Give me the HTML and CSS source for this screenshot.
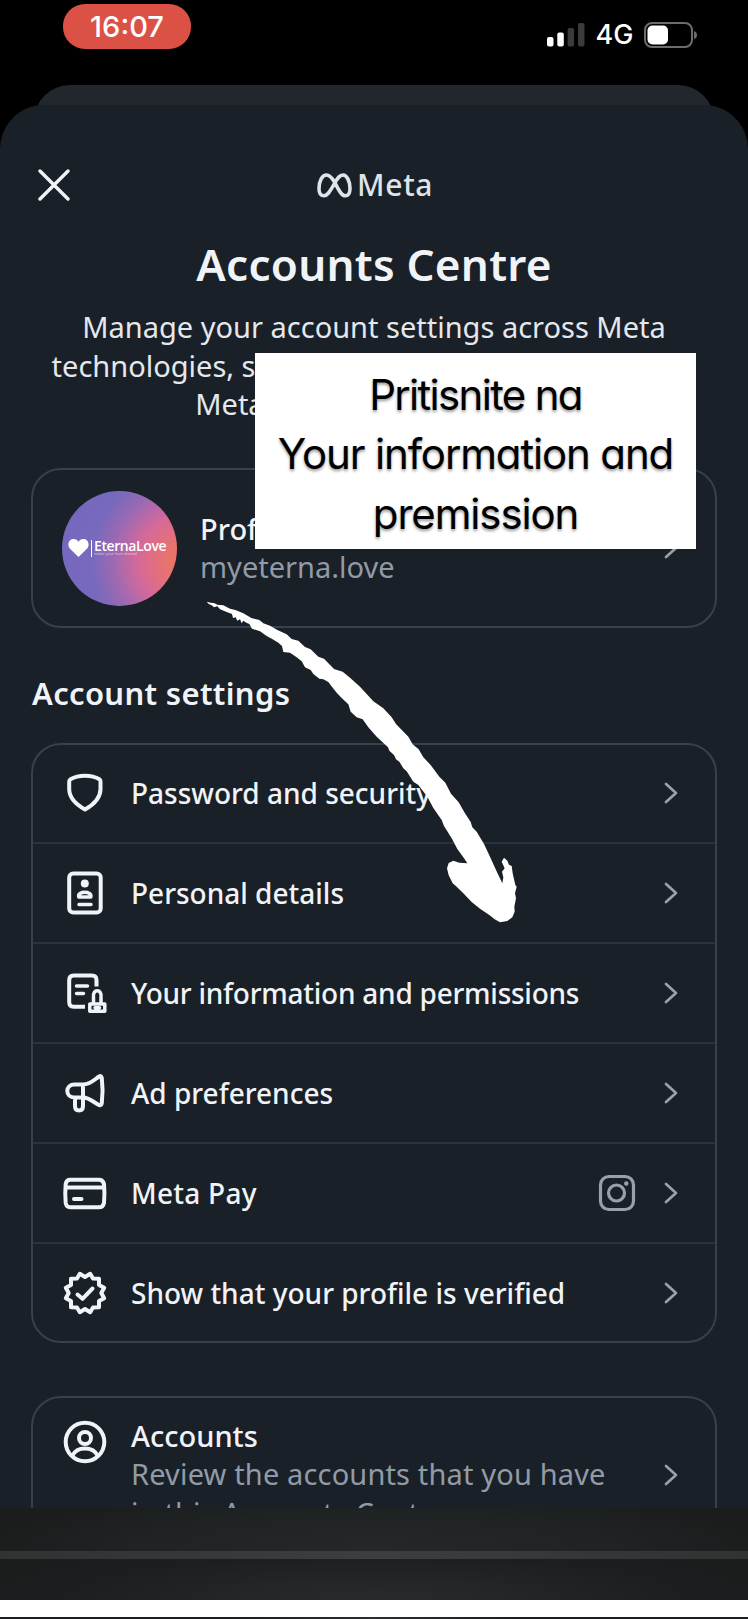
FILE: index.html
```html
<!DOCTYPE html>
<html lang="en">
<head>
<meta charset="utf-8">
<title>Accounts Centre</title>
<link rel="stylesheet" href="styles.css">
</head>
<body>
<div class="screen">
  <header class="status">
    <div class="clock">16:07</div>
    <div class="signals">
      <svg class="bars" width="38" height="24" viewBox="0 0 38 24">
        <rect x="0" y="14" width="6.5" height="9.5" rx="2" fill="#fff"/>
        <rect x="10.300" y="9.500" width="6.500" height="14" rx="2" fill="#fff"/>
        <rect x="20.600" y="5" width="6.500" height="18.500" rx="2" fill="#3b3b3d"/>
        <rect x="31" y="0" width="6.500" height="23.500" rx="2" fill="#3b3b3d"/>
      </svg>
      <span class="network">4G</span>
      <svg class="battery" width="53" height="26" viewBox="0 0 53 26">
        <rect x="1" y="1" width="47" height="24" rx="7" fill="none" stroke="#6c6c6e" stroke-width="2"/>
        <rect x="3.500" y="3.500" width="20.500" height="19" rx="5" fill="#fff"/>
        <path d="M50 9q3 1 3 4t-3 4z" fill="#6c6c6e"/>
      </svg>
    </div>
  </header>
  <div class="sheet-behind"></div>
  <main class="sheet">
    <div class="topbar">
      <svg class="close" width="32" height="32" viewBox="0 0 32 32"><path d="M2 2L30 30M30 2L2 30" stroke="#f1f4f7" stroke-width="3.400" stroke-linecap="round"/></svg>
      <div class="brand">
        <svg width="35" height="25" viewBox="0 0 35 25"><path d="M17.500 9C14.500 4 12.500 2 9.500 2C5 2 2 8.500 2 15.500C2 20 3.800 22.800 7 22.800C10 22.800 12.500 19.500 17.500 10.500C20.500 5 22.500 2 26 2C30 2 33 8.500 33 15.500C33 20 31.300 22.800 28.200 22.800C25 22.800 22.500 19 17.500 9Z" fill="none" stroke="#dfe4ea" stroke-width="3.600"/></svg>
        <span class="brand-name">Meta</span>
      </div>
    </div>
    <h1 class="title">Accounts Centre</h1>
    <p class="intro">Manage your account settings across Meta<br>technologies, such as Facebook, Instagram and<br>Meta Horizon. Learn more</p>

    <section class="card profile">
      <div class="avatar">
        <svg class="heart" width="21" height="18" viewBox="0 0 21 18"><path d="M10.500 18L2 9.800C-1 6.500 .3 0 5.500 0C8 0 9.600 1.200 10.500 2.800C11.400 1.200 13 0 15.500 0C20.700 0 22 6.500 19 9.800Z" fill="#fff"/></svg>
        <div class="wordmark"><span class="logo-name">EternaLove</span><span class="logo-tag">make your love eternal</span></div>
      </div>
      <div class="profile-text"><div class="strong">Profiles</div><div class="muted handle">myeterna.love</div></div>
      <svg class="chevron" width="14" height="24" viewBox="0 0 14 24"><path d="M2 3L12 12L2 21"/></svg>
    </section>

    <h2 class="section-title">Account settings</h2>
    <section class="card list">
      <div class="row">
        <svg class="icon" viewBox="0 0 48 48"><path d="M24 6.700C30 6.700 35 8.200 38.500 10.300Q39.500 11 39.500 12.500V20C39.500 30 32 36 24 40.500C16 36 8.200 30 8.200 20V12.500Q8.200 11 9.500 10.300C13 8.200 18 6.700 24 6.700Z"/></svg>
        <span class="label">Password and security</span>
        <svg class="chevron" width="14" height="24" viewBox="0 0 14 24"><path d="M2 3L12 12L2 21"/></svg>
      </div>
      <div class="row">
        <svg class="icon" viewBox="0 0 48 48"><rect x="8.200" y="4.500" width="31.500" height="39" rx="4"/><circle cx="23.800" cy="14.500" r="4" class="solid"/><path class="fine" d="M17.800 28C16 21.800 31.500 21.800 29.800 28ZM18 35.500H30"/></svg>
        <span class="label">Personal details</span>
        <svg class="chevron" width="14" height="24" viewBox="0 0 14 24"><path d="M2 3L12 12L2 21"/></svg>
      </div>
      <div class="row">
        <svg class="icon" viewBox="0 0 48 48"><path class="butt" d="M35.500 17.500V11Q35.500 6.500 31 6.500H12.500Q8.200 6.500 8.200 11V33Q8.200 37.700 12.500 37.700H24"/><path class="fine" d="M15.500 17H26.500M15.500 24.500H22.500M32.500 34V28.500C31 19.500 41.500 19.500 40 28.500V34M28.800 35H43.800V42.300H28.800ZM34 38.700H38.500"/></svg>
        <span class="label tight">Your information and permissions</span>
        <svg class="chevron" width="14" height="24" viewBox="0 0 14 24"><path d="M2 3L12 12L2 21"/></svg>
      </div>
      <div class="row">
        <svg class="icon" viewBox="0 0 48 48"><path d="M22 15.500H13.500C9 15.500 6.300 18.500 6.300 22S9 28.500 13.500 28.500H22C28 28.500 33 33.500 38 36Q40.500 36.700 40.800 34C41.800 26 41.800 17 40.800 9Q40.300 6.300 38 7.500C33 11 29 15.500 22 15.500ZM22 15.500V37Q22 41.500 18 41.500Q14 41.500 14 37V28.500"/></svg>
        <span class="label">Ad preferences</span>
        <svg class="chevron" width="14" height="24" viewBox="0 0 14 24"><path d="M2 3L12 12L2 21"/></svg>
      </div>
      <div class="row">
        <svg class="icon" viewBox="0 0 48 48"><path d="M9 10.800H38Q42 10.800 43 15Q43.900 24.500 43 34Q42 38.300 38 38.300H9Q5.500 38.300 4.700 34Q3.800 24.500 4.700 15Q5.500 10.800 9 10.800ZM5 18.500H43M13 30H20.500"/></svg>
        <span class="label wide">Meta Pay</span>
        <svg class="insta" width="38" height="38" viewBox="0 0 38 38"><rect x="2.500" y="2.500" width="33" height="33" rx="8.500"/><circle cx="18.500" cy="19" r="8"/><circle cx="28.300" cy="9.500" r="2.200" class="dot"/></svg>
        <svg class="chevron" width="14" height="24" viewBox="0 0 14 24"><path d="M2 3L12 12L2 21"/></svg>
      </div>
      <div class="row">
        <svg class="icon" viewBox="0 0 48 48"><path d="M24 8L29.200 4.800L32 9.500L38 9.800V16L43.200 18.800L40.300 24L43.200 29.200L38 32V38.200L32 38.500L29.200 43.200L24 40L18.800 43.200L16 38.500L10 38.200V32L4.800 29.200L7.700 24L4.800 18.800L10 16V9.800L16 9.500L18.800 4.800ZM16.500 25.500L21.500 29.800L31.500 19.500"/></svg>
        <span class="label">Show that your profile is verified</span>
        <svg class="chevron" width="14" height="24" viewBox="0 0 14 24"><path d="M2 3L12 12L2 21"/></svg>
      </div>
    </section>

    <section class="card accounts">
      <svg class="icon" viewBox="0 0 48 48"><circle cx="24" cy="24" r="19.300"/><circle cx="24" cy="20" r="6"/><path d="M11.500 37.500C16 28 32 28 36.500 37.500"/></svg>
      <div class="accounts-text"><div class="strong acc">Accounts</div><div class="muted review">Review the accounts that you have<br>in this Accounts Centre.</div></div>
      <svg class="chevron" width="14" height="24" viewBox="0 0 14 24"><path d="M2 3L12 12L2 21"/></svg>
    </section>
  </main>
  <footer class="player">
    <div class="player-top"></div>
    <div class="track"></div>
    <div class="player-bottom"></div>
    <div class="white"></div>
    <div class="edge"></div>
  </footer>

  <div class="note">Pritisnite na<br>Your information and<br>premission</div>
  <svg class="arrow" width="360" height="350" viewBox="0 0 1080 1050"><path d="M50 35L62 38L72 39L82 44L100 46L120 56L136 60L160 70L184 84L208 90L220 100L240 107L262 120L290 133L305 147L325 152L345 171L362 178L385 200L402 206L432 237L458 245L480 263L510 290L550 334L580 355L605 382L618 402L655 440L668 463L686 478L700 502L722 525L748 560L766 578L783 611L806 637L824 668L842 696L847 712L860 725L882 762L900 800L918 840L937 880L940 862L936 845L944 835L935 815L942 803L952 812L957 824L965 828L968 850L976 885L980 890L975 910L978 925L973 950L974 965L967 982L952 993L930 997L914 988L898 975L870 956L845 936L820 910L800 890L788 880L776 856L771 835L776 819L790 812L808 818L832 820L820 802L802 777L785 745L762 708L755 690L730 654L712 620L685 585L670 575L650 544L640 535L628 515L618 508L612 495L598 482L594 472L560 440L535 412L518 388L500 382L482 365L475 343L455 324L440 308L424 288L415 276L400 268L388 266L370 252L362 240L345 232L335 214L320 202L300 188L280 186L276 168L265 158L248 148L230 138L210 124L186 116L178 102L169 98L160 92L155 100L150 88L142 92L137 82L129 84L126 72L110 66L90 58L82 49L72 52L65 46L56 42Z" fill="#fff"/></svg>
</div>
</body>
</html>
```
FILE: styles.css
```css
* { box-sizing: border-box; }
body { margin: 0; background: #000; }
.screen {
  position: relative;
  width: 748px;
  height: 1619px;
  overflow: hidden;
  display: flex;
  flex-direction: column;
  background: #000;
  color: #f0f3f7;
  font-family: "Noto Sans", sans-serif;
}
.status {
  height: 85px;
  flex: none;
  display: flex;
  justify-content: space-between;
  align-items: flex-start;
  padding: 4px 51px 0 63px;
  font-family: Inter, sans-serif;
  color: #fff;
}
.clock {
  width: 128px;
  height: 45px;
  border-radius: 22px;
  background: #dc5145;
  font-size: 29px;
  line-height: 45px;
  font-weight: 500;
  text-align: center;
}
.signals { display: flex; align-items: center; padding-top: 16px; }
.bars { margin-top: 1px; }
.network { font-size: 27px; line-height: 28px; padding-top: 1px; font-weight: 500; width: 59px; text-align: center; }
.battery { display: block; }
.sheet-behind {
  flex: none;
  height: 60px;
  margin: 0 34px -40px;
  border-radius: 36px 36px 0 0;
  background: #22272d;
}
.sheet {
  position: relative;
  flex: none;
  height: 1403px;
  overflow: hidden;
  padding: 0 31px;
  border-radius: 44px 44px 0 0;
  background: #1a2027;
}
.topbar { display: flex; padding: 64px 0 0 7px; height: 128px; }
.brand { display: flex; margin-left: 247px; gap: 5px; height: 32px; align-items: center; }
.brand-name { font-size: 30px; line-height: 32px; font-weight: 500; letter-spacing: .7px; color: #dfe4ea; }
.title { margin: 0; height: 75px; line-height: 62px; font-size: 44px; font-weight: 600; letter-spacing: .25px; text-align: center; }
.intro { margin: 0; height: 160px; line-height: 38.500px; font-size: 29px; text-align: center; white-space: nowrap; color: #e4e8ee; }
.card { border: 2px solid #36414b; border-radius: 30px; }
.profile { display: flex; align-items: center; height: 160px; padding: 0 37px 0 29px; }
.avatar {
  width: 115px;
  height: 115px;
  border-radius: 50%;
  display: flex;
  align-items: center;
  padding-left: 6px;
  background: radial-gradient(circle at 108% 62%, #ee765f 0%, #e9736d 14%, #d5699a 34%, #9a69b3 52%, #7869bd 66%, #7268bf 100%);
}
.heart { flex: none; }
.wordmark { display: flex; flex-direction: column; border-left: 1px solid #fff; margin-left: 2px; padding-left: 2px; height: 17px; color: #fff; white-space: nowrap; }
.logo-name { font-family: "Open Sans", sans-serif; font-size: 14px; line-height: 11px; font-weight: 600; letter-spacing: -.4px; }
.logo-tag { font-size: 4px; line-height: 6px; opacity: .6; }
.profile-text { margin-left: 23px; flex: 1; }
.strong { font-size: 29px; line-height: 38px; font-weight: 500; }
.muted { font-size: 29px; line-height: 38px; color: #919ba7; }
.review { letter-spacing: .15px; line-height: 38.500px; }
.chevron { flex: none; fill: none; stroke: #98a1ab; stroke-width: 2.700; stroke-linecap: round; stroke-linejoin: round; }
.section-title { margin: 0; height: 115px; padding: 43px 0 0 1px; line-height: 44px; font-size: 31px; font-weight: 600; letter-spacing: .32px; }
.list { height: 600px; display: flex; flex-direction: column; }
.row { height: 100px; flex: none; display: flex; align-items: center; padding: 0 37px 0 28px; border-top: 2px solid #2a333b; }
.row:first-child { border-top: 0; height: 97px; padding-bottom: 2px; }
.icon { flex: none; width: 48px; height: 48px; fill: none; stroke: #f0f3f7; stroke-width: 4; stroke-linecap: round; stroke-linejoin: round; }
.icon .solid { fill: #f0f3f7; stroke: none; }
.icon .butt { stroke-linecap: butt; }
.icon .fine { stroke-width: 3.500; }
.label { flex: 1; margin-left: 22px; font-size: 28px; line-height: 40px; font-weight: 500; white-space: nowrap; }
.tight { letter-spacing: -.25px; }
.wide { letter-spacing: .25px; }
.insta { margin-right: 28px; fill: none; stroke: #98a1ab; stroke-width: 3.200; }
.insta .dot { fill: #98a1ab; stroke: none; }
.accounts { margin-top: 53px; height: 160px; display: flex; padding: 19px 37px 0 28px; }
.accounts-text { flex: 1; margin-left: 22px; white-space: nowrap; }
.accounts .icon { margin-top: 1px; }
.accounts .chevron { margin-top: 46px; }
.player { flex: none; display: flex; flex-direction: column; height: 111px; }
.player-top { height: 43px; background: radial-gradient(ellipse 55% 150% at 50% 100%, #25282a, #1f2324 60%, #1b1c1c); }
.track { height: 8px; background: linear-gradient(90deg, #303233, #35383a 25%, #3d3e40 50%, #35383a 75%, #303233); }
.player-bottom { height: 41px; background: radial-gradient(ellipse 55% 150% at 50% 100%, #2a2a2c, #212426 45%, #1b1f22 75%, #1b1c1c); }
.white { height: 17px; background: #fff; }
.edge { height: 2px; background: linear-gradient(90deg, #1b1f22 30%, #2c2d2f 50%, #1b1f22 70%); }
.note {
  position: absolute;
  left: 255px;
  top: 353px;
  width: 441px;
  height: 196px;
  padding-top: 12px;
  background: #fff;
  color: #000;
  font-family: Inter, sans-serif;
  font-feature-settings: "cv11";
  font-size: 42px;
  line-height: 59.300px;
  letter-spacing: -1.150px;
  text-align: center;
  white-space: nowrap;
  text-shadow: 0 2px 3px rgba(0, 0, 0, .4);
}
.note::first-line { letter-spacing: -1.700px; }
.arrow { position: absolute; left: 190px; top: 590px; }
```
